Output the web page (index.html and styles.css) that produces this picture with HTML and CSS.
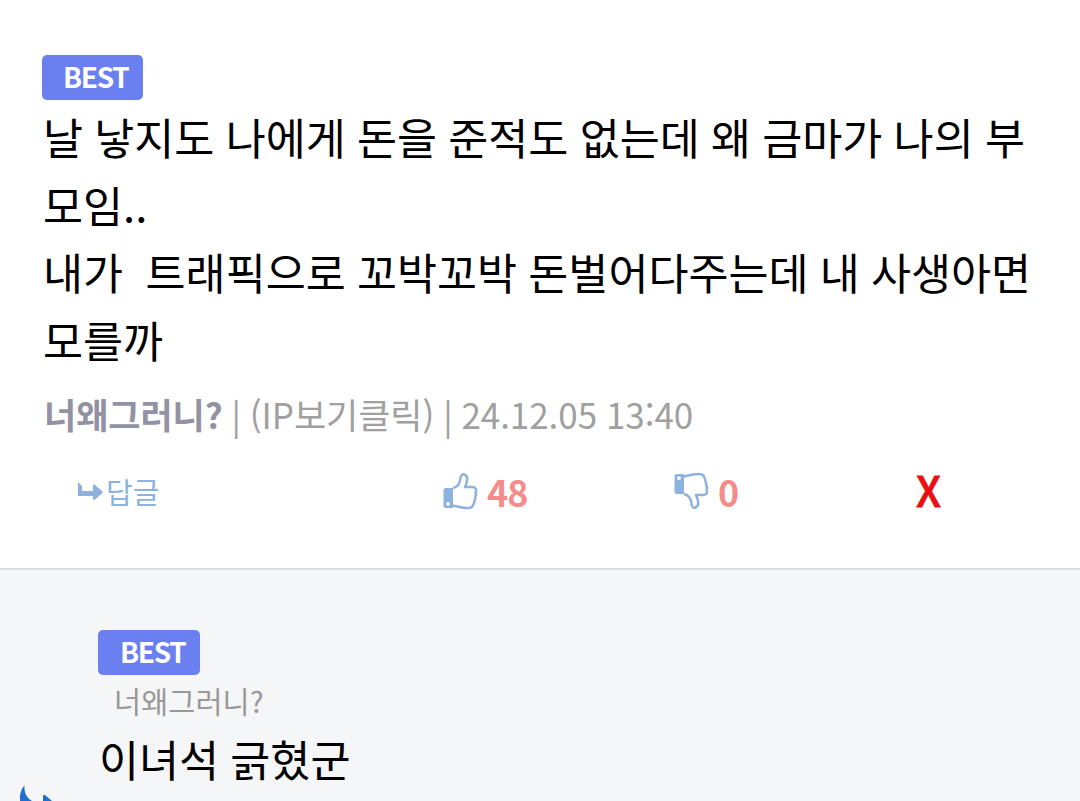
FILE: index.html
```html
<!DOCTYPE html>
<html lang="ko">

<head>
  <meta charset="UTF-8" />
  <meta name="viewport" content="width=device-width, initial-scale=1.0" />
  <title>댓글</title>
  <link rel="stylesheet" href="styles.css">
</head>

<body>
  <div class="comment">
    <span class="best">BEST</span>
    <p class="text">날 낳지도 나에게 돈을 준적도 없는데 왜 금마가 나의 부<br>모임..<br>내가&nbsp; 트래픽으로 꼬박꼬박 돈벌어다주는데 내 사생아면<br>모를까</p>
    <div class="info"><strong>너왜그러니?</strong> | (IP보기클릭) | 24.12.05 13:40</div>
    <div class="actions">
      <a class="reply-link">
        <svg width="27" height="20" viewBox="0 0 27 20">
          <path d="M1 1l4 4v5h11V4.500q0-2 2-.5l7 6q1.500 1.200 0 2.400l-7 6q-2 1.500-2-.5V15H1z" fill="currentColor" />
        </svg>
        <span>답글</span>
      </a>
      <a class="vote">
        <svg width="36" height="38" viewBox="0 0 36 38">
          <path d="M10 16c5-1 7-5 7.500-10 .3-3 2-4.200 4-3.500 4 1.500 3 7 .5 12.500h7c4 0 5 3 3.500 5.500q1.300 2-.3 4 .8 2-.8 4 .4 2-.9 3.500c-.5 3-2 4-5.500 4-6 .2-11-1.500-15-2.500" fill="none" stroke="currentColor" stroke-width="2.500" stroke-linejoin="round" />
          <path fill-rule="evenodd" d="M3 16h7v20H3q-2.500 0-2.500-2.500v-15Q.5 16 3 16zM5 30a1.900 1.900 0 1 0 .01 0z" fill="currentColor" />
        </svg>
        <span>48</span>
      </a>
      <a class="vote">
        <svg class="down" width="36" height="38" viewBox="0 0 36 38">
          <path d="M10 16c5-1 7-5 7.500-10 .3-3 2-4.200 4-3.500 4 1.500 3 7 .5 12.500h7c4 0 5 3 3.500 5.500q1.300 2-.3 4 .8 2-.8 4 .4 2-.9 3.500c-.5 3-2 4-5.500 4-6 .2-11-1.500-15-2.500" fill="none" stroke="currentColor" stroke-width="2.500" stroke-linejoin="round" />
          <path fill-rule="evenodd" d="M3 16h7v20H3q-2.500 0-2.500-2.500v-15Q.5 16 3 16zM5 30a1.900 1.900 0 1 0 .01 0z" fill="currentColor" />
        </svg>
        <span>0</span>
      </a>
      <a class="delete">X</a>
    </div>
  </div>

  <div class="comment reply">
    <span class="best">BEST</span>
    <div class="to">너왜그러니?</div>
    <p class="text">이녀석 긁혔군</p>
    <!-- reply arrow, runs off the bottom -->
    <svg class="arrow" width="36" height="16" viewBox="0 0 36 16">
      <path d="M4 1C2 3 0 8 0 12v4h12C7 13 4 8 4.500 1zM23 16v-5q1-2 2.500-.5l6.500 5.500z" fill="#1f6fd0" />
    </svg>
  </div>
</body>

</html>
```
FILE: styles.css
```css
* {
  box-sizing: border-box;
}

body {
  margin: 0;
  height: 801px;
  overflow: hidden;
  background: #fff;
  color: #000;
  font-family: 'Noto Sans CJK KR', sans-serif;
}

.comment {
  height: 570px;
  padding: 55px 42px 0;
  border-bottom: 2px solid #ddd;
}

.best {
  display: block;
  width: 101px;
  height: 45px;
  padding-left: 21px;
  border-radius: 5px;
  background: #6a7ff0;
  color: #fff;
  font-size: 28px;
  font-weight: 700;
  letter-spacing: -1.3px;
  line-height: 42px;
}

.text {
  margin: 3px 0 0;
  padding-left: 1px;
  font-size: 43.5px;
  line-height: 67.5px;
  word-spacing: -0.9px;
  white-space: nowrap;
}

.info {
  margin-top: 16px;
  padding-left: 2px;
  color: #a0a0a0;
  font-size: 35px;
  line-height: 50px;
  letter-spacing: -0.05px;
  word-spacing: -0.9px;
  white-space: nowrap;
}

.info strong {
  color: #9292a2;
}

.actions {
  display: grid;
  grid-template-columns: 401px 231px 242px 1fr;
  align-items: center;
  height: 56px;
  margin-top: 23px;
}

.actions a {
  display: flex;
  align-items: center;
}

.reply-link {
  gap: 2px;
  padding-left: 35px;
  color: #8db2e0;
  font-size: 29px;
}

.vote {
  gap: 8px;
  color: #8db2e0;
}

.vote span {
  color: #f58c8c;
  font-size: 36px;
  font-weight: 700;
  letter-spacing: -1px;
}

.down {
  transform: scaleY(-1);
}

.actions .delete {
  margin: -4px 0 0;
  color: #e81010;
  font-size: 42px;
  font-weight: 500;
  -webkit-text-stroke: 0.8px #e81010;
}

.reply {
  position: relative;
  height: 231px;
  padding: 60px 98px 0;
  border: 0;
  background: #f4f6f8;
}

.reply .best {
  width: 102px;
  padding-left: 22px;
}

.to {
  padding-left: 16px;
  color: #999;
  font-size: 29.5px;
  line-height: 50px;
}

.reply .text {
  margin-top: 0;
  padding-left: 1px;
}

.arrow {
  position: absolute;
  left: 20px;
  bottom: 0;
}
```
